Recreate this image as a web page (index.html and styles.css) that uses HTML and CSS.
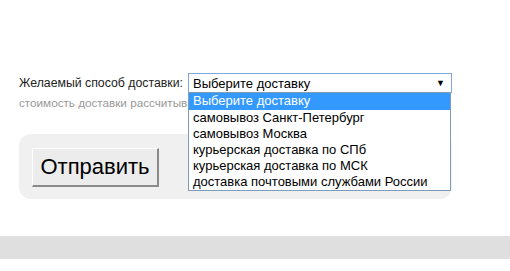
FILE: index.html
```html
<!DOCTYPE html>
<html lang="ru">

<head>
    <meta charset="UTF-8">
    <meta name="viewport" content="width=device-width, initial-scale=1.0">
    <title>Доставка</title>
    <link rel="stylesheet" href="styles.css">
</head>

<body>
    <div class="order-form">
        <div class="delivery-row">
            <label class="delivery-label">Желаемый способ доставки:</label>
            <div class="select-wrap">
                <div class="select-box">
                    <span>Выберите доставку</span>
                    <span class="select-arrow">&#9660;</span>
                </div>
                <ul class="select-list">
                    <li class="selected">Выберите доставку</li>
                    <li>самовывоз Санкт-Петербург</li>
                    <li>самовывоз Москва</li>
                    <li>курьерская доставка по СПб</li>
                    <li>курьерская доставка по МСК</li>
                    <li>доставка почтовыми службами России</li>
                </ul>
            </div>
        </div>
        <div class="delivery-hint">стоимость доставки рассчитывается</div>

        <div class="submit-panel">
            <button class="submit-btn">Отправить</button>
        </div>
    </div>

    <div class="footer-band"></div>
</body>

</html>
```

FILE: styles.css
```css
body {
    margin: 0;
    font-family: 'Liberation Sans', Arial, sans-serif;
    color: #222;
    background: #fff;
}

.order-form {
    padding: 73px 0 0 19px;
}

.delivery-row {
    display: flex;
    align-items: center;
    gap: 5px;
}

.delivery-label {
    font-size: 12.3px;
}

.select-wrap {
    position: relative;
    width: 264px;
}

.select-box {
    display: flex;
    justify-content: space-between;
    align-items: center;
    height: 18px;
    padding: 0 6px 0 4px;
    border: 1px solid #7ea6e0;
    font-size: 13px;
    color: #000;
    background: #fff;
}

.select-arrow {
    font-size: 9px;
}

/* opened dropdown lies over the hint */
.select-list {
    position: absolute;
    top: 19px;
    left: 0;
    width: 261px;
    margin: 0;
    padding: 0;
    list-style: none;
    border: 1px solid #7f9db9;
    background: #fff;
    font-size: 13px;
    color: #000;
    z-index: 10;
}

.select-list li {
    height: 16px;
    line-height: 16px;
    padding-left: 4px;
    white-space: nowrap;
}

.select-list li.selected {
    height: 17px;
    background: #3399ff;
    color: #fff;
}

.delivery-hint {
    margin-top: 3px;
    font-size: 11.7px;
    line-height: 14px;
    color: #999;
    white-space: nowrap;
}

.submit-panel {
    width: 407px;
    height: 51px;
    margin-top: 24px;
    padding: 14px 13px 0 13px;
    background: #f0f0f0;
    border-radius: 12px;
}

.submit-btn {
    width: 127px;
    height: 39px;
    padding: 0;
    font-family: 'Liberation Sans', Arial, sans-serif;
    font-size: 22px;
    color: #000;
    background: #ececec;
    border: 1px solid #fff;
    border-right: 2px solid #8a8a8a;
    border-bottom: 2px solid #8a8a8a;
}

.footer-band {
    height: 23px;
    margin-top: 37px;
    background: #dfdfdf;
}
```
